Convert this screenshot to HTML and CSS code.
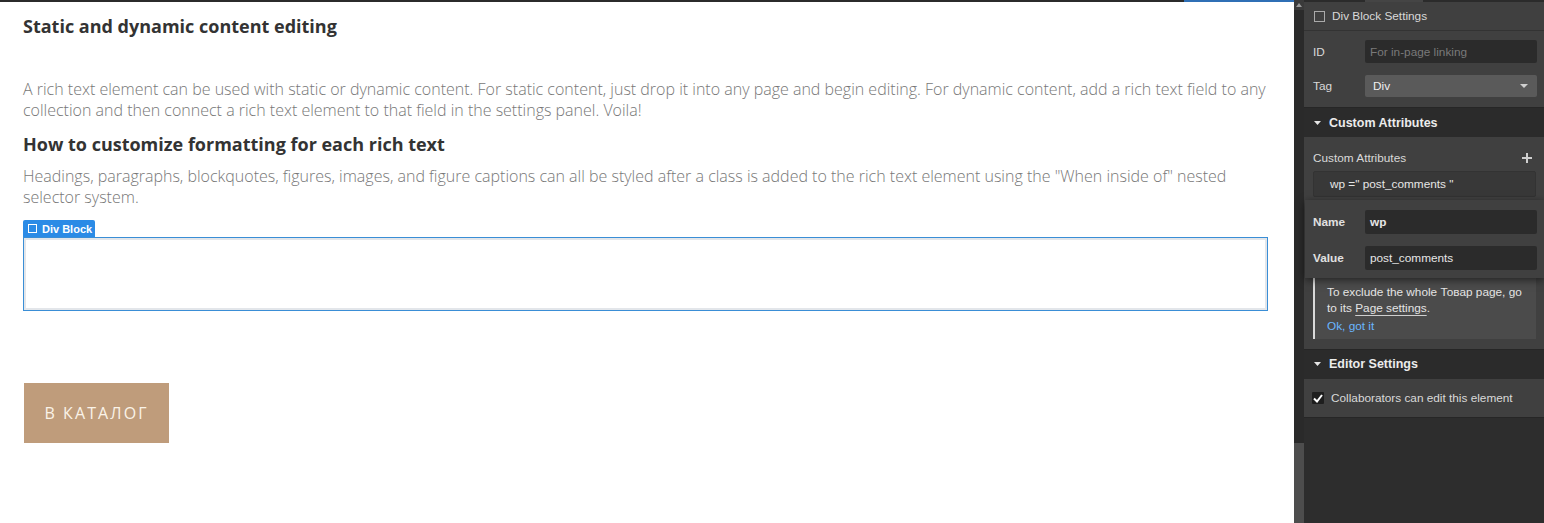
FILE: index.html
```html
<!DOCTYPE html>
<html>
<head>
<meta charset="utf-8">
<link rel="stylesheet" href="styles.css">
</head>
<body>
<div class="app">
  <main class="canvas">
    <div class="canvas-top"><span class="canvas-top-sel"></span></div>
    <div class="content">
      <h2 class="rt-h">Static and dynamic content editing</h2>
      <p class="rt-p first">A rich text element can be used with static or dynamic content. For static content, just drop it into any page and begin editing. For dynamic content, add a rich text field to any collection and then connect a rich text element to that field in the settings panel. Voila!</p>
      <h2 class="rt-h second">How to customize formatting for each rich text</h2>
      <p class="rt-p">Headings, paragraphs, blockquotes, figures, images, and figure captions can all be styled after a class is added to the rich text element using the "When inside of" nested selector system.</p>
      <div class="sel-label"><span class="sel-box"></span>Div Block</div>
      <div class="sel-block"><div class="sel-inner"></div></div>
      <a class="btn">В КАТАЛОГ</a>
    </div>
  </main>
  <div class="scrollbar">
    <div class="sb-up"><svg width="6" height="4" viewBox="0 0 6 4"><path d="M0 4 L3 0 L6 4Z" fill="#9a9a9a"/></svg></div>
    <div class="sb-track"></div>
    <div class="sb-thumb"></div>
  </div>
  <aside class="panel">
    <div class="panel-top"><span class="panel-tab"></span></div>
    <div class="settings-title"><span class="sq"></span>Div Block Settings</div>
    <div class="section-body idtag">
      <div class="field-row"><span class="flabel">ID</span><div class="input placeholder">For in-page linking</div></div>
      <div class="field-row tag"><span class="flabel">Tag</span><div class="select">Div<svg class="caret" width="8" height="4" viewBox="0 0 8 4"><path d="M0 0 L8 0 L4 4Z" fill="#d0d0d0"/></svg></div></div>
    </div>
    <div class="sec-head"><svg class="tri" width="7" height="4" viewBox="0 0 7 4"><path d="M0 0 L7 0 L3.5 4Z" fill="#e6e6e6"/></svg>Custom Attributes</div>
    <div class="section-body attrs">
      <div class="attr-title"><span>Custom Attributes</span><svg width="10" height="10" viewBox="0 0 10 10"><path d="M5 0 V10 M0 5 H10" stroke="#cfcfcf" stroke-width="2"/></svg></div>
      <div class="attr-item">wp =" post_comments "</div>
      <div class="tip">
        <div class="tip-text">To exclude the whole Товар page, go to its <span class="ul">Page settings</span>.</div>
        <div class="tip-ok">Ok, got it</div>
      </div>
      <div class="popover">
        <div class="pop-row"><span class="plabel">Name</span><div class="input bold">wp</div></div>
        <div class="pop-row"><span class="plabel">Value</span><div class="input">post_comments</div></div>
      </div>
    </div>
    <div class="sec-head"><svg class="tri" width="7" height="4" viewBox="0 0 7 4"><path d="M0 0 L7 0 L3.5 4Z" fill="#e6e6e6"/></svg>Editor Settings</div>
    <div class="section-body editor">
      <div class="check-row"><span class="chk"><svg width="10" height="9" viewBox="0 0 10 9"><path d="M1 4.5 L4 7.5 L9 1" stroke="#fff" stroke-width="2" fill="none"/></svg></span>Collaborators can edit this element</div>
    </div>
    <div class="panel-rest"></div>
  </aside>
</div>
</body>
</html>
```
FILE: styles.css
```css
* { box-sizing: border-box; }
html, body { margin: 0; padding: 0; }
body { width: 1544px; height: 523px; overflow: hidden; background: #fff; }
.app { display: flex; height: 523px; }

.canvas { width: 1294px; flex: none; background: #fff; display: flex; flex-direction: column; }
.canvas-top { height: 2px; background: #2b2b2b; display: flex; justify-content: flex-end; }
.canvas-top-sel { width: 110px; background: #2f6fb5; }
.content { padding: 12px 26px 0 23px; font-family: "Open Sans", "Liberation Sans", sans-serif; }
.rt-h { margin: 0; font-size: 18px; line-height: 24px; font-weight: 700; color: #333; }
.rt-h.second { margin-top: 11px; }
.rt-p { margin: 10px 0 0; font-size: 16px; line-height: 21px; font-weight: 300; color: #777; }
.rt-p.first { margin-top: 41px; }
.sel-label { margin-top: 12px; width: 72px; height: 17px; background: #2b8be6; color: #fff; font-family: "Liberation Sans", Arial, sans-serif; font-size: 11px; font-weight: 700; display: flex; align-items: center; padding-left: 5px; gap: 5px; border-radius: 2px 2px 0 0; }
.sel-box { width: 9px; height: 9px; border: 1px solid #fff; }
.sel-block { height: 74px; border: 1px solid #3a8ed6; padding: 2px; background: #e3e6ea; }
.sel-inner { height: 100%; background: #fff; }
.btn { display: inline-flex; align-items: center; justify-content: center; margin: 72px 0 0 1px; width: 145px; height: 60px; background: #bf9c7b; color: #faf3e8; font-size: 16px; letter-spacing: 2.1px; font-weight: 400; }

.scrollbar { width: 10px; flex: none; display: flex; flex-direction: column; background: #2a2a2a; }
.sb-up { height: 10px; background: #3a3a3a; display: flex; align-items: center; justify-content: center; }
.sb-track { flex: 1; }
.sb-thumb { height: 80px; background: #4d4d4d; }

.panel { width: 240px; flex: none; background: #2d2d2d; display: flex; flex-direction: column; position: relative; font-family: "Liberation Sans", Arial, sans-serif; font-size: 11.8px; color: #d9d9d9; }
.panel-top { height: 2px; background: #2b2b2b; padding-left: 61px; display: flex; }
.panel-tab { width: 58px; background: #454545; }
.settings-title { height: 29px; background: #404040; border-bottom: 1px solid #333; display: flex; align-items: center; padding-left: 10px; gap: 7px; }
.sq { width: 11px; height: 11px; border: 1px solid #aaa; }
.section-body { background: #404040; }
.idtag { padding: 9px 7px 10px 9px; display: flex; flex-direction: column; gap: 12px; }
.field-row { display: flex; align-items: center; height: 23px; }
.field-row.tag { height: 22px; }
.flabel { width: 52px; }
.input { flex: 1; height: 100%; background: #2b2b2b; display: flex; align-items: center; padding-left: 5px; color: #e6e6e6; border-radius: 2px; }
.input.placeholder { color: #7a7a7a; }
.input.bold { font-weight: 700; }
.select { flex: 1; height: 100%; background: #5a5a5a; display: flex; align-items: center; justify-content: space-between; padding: 0 9px 0 8px; color: #f0f0f0; border-radius: 2px; }
.sec-head { height: 30px; background: #2b2b2b; border-top: 1px solid #262626; display: flex; align-items: center; padding-left: 10px; gap: 8px; font-weight: 700; font-size: 12.5px; color: #ececec; }
.tri { flex: none; }
.attrs { position: relative; padding: 14px 8px 10px 9px; }
.attr-title { display: flex; justify-content: space-between; align-items: center; height: 14px; padding-right: 4px; }
.attr-item { margin-top: 6px; height: 26px; background: #383838; border: 1px solid #333; display: flex; align-items: center; padding-left: 16px; color: #e6e6e6; border-radius: 2px; }
.tip { margin-top: 79px; margin-left: 0; background: #4b4b4b; border-left: 2px solid #d9d9d9; padding: 9px 8px 4px 12px; color: #e4e4e4; line-height: 15.5px; }
.ul { text-decoration: underline; text-decoration-color: #cfcfcf; text-underline-offset: 3px; }
.tip-ok { margin-top: 3px; color: #6ab6ff; }
.popover { position: absolute; left: 1px; top: 63px; width: 239px; height: 78px; background: #404040; box-shadow: 0 2px 8px rgba(0,0,0,0.55); padding: 10px 7px 0 8px; display: flex; flex-direction: column; gap: 12px; }
.pop-row { display: flex; align-items: center; height: 24px; }
.plabel { width: 52px; font-weight: 700; color: #e0e0e0; }
.editor { padding: 0 8px; height: 39px; display: flex; align-items: center; border-bottom: 1px solid #262626; }
.check-row { display: flex; align-items: center; gap: 7px; padding-top: 1px; }
.chk { width: 12px; height: 12px; background: #1e1e1e; display: flex; align-items: center; justify-content: center; border-radius: 1px; }
.panel-rest { flex: 1; background: #2d2d2d; }
```
